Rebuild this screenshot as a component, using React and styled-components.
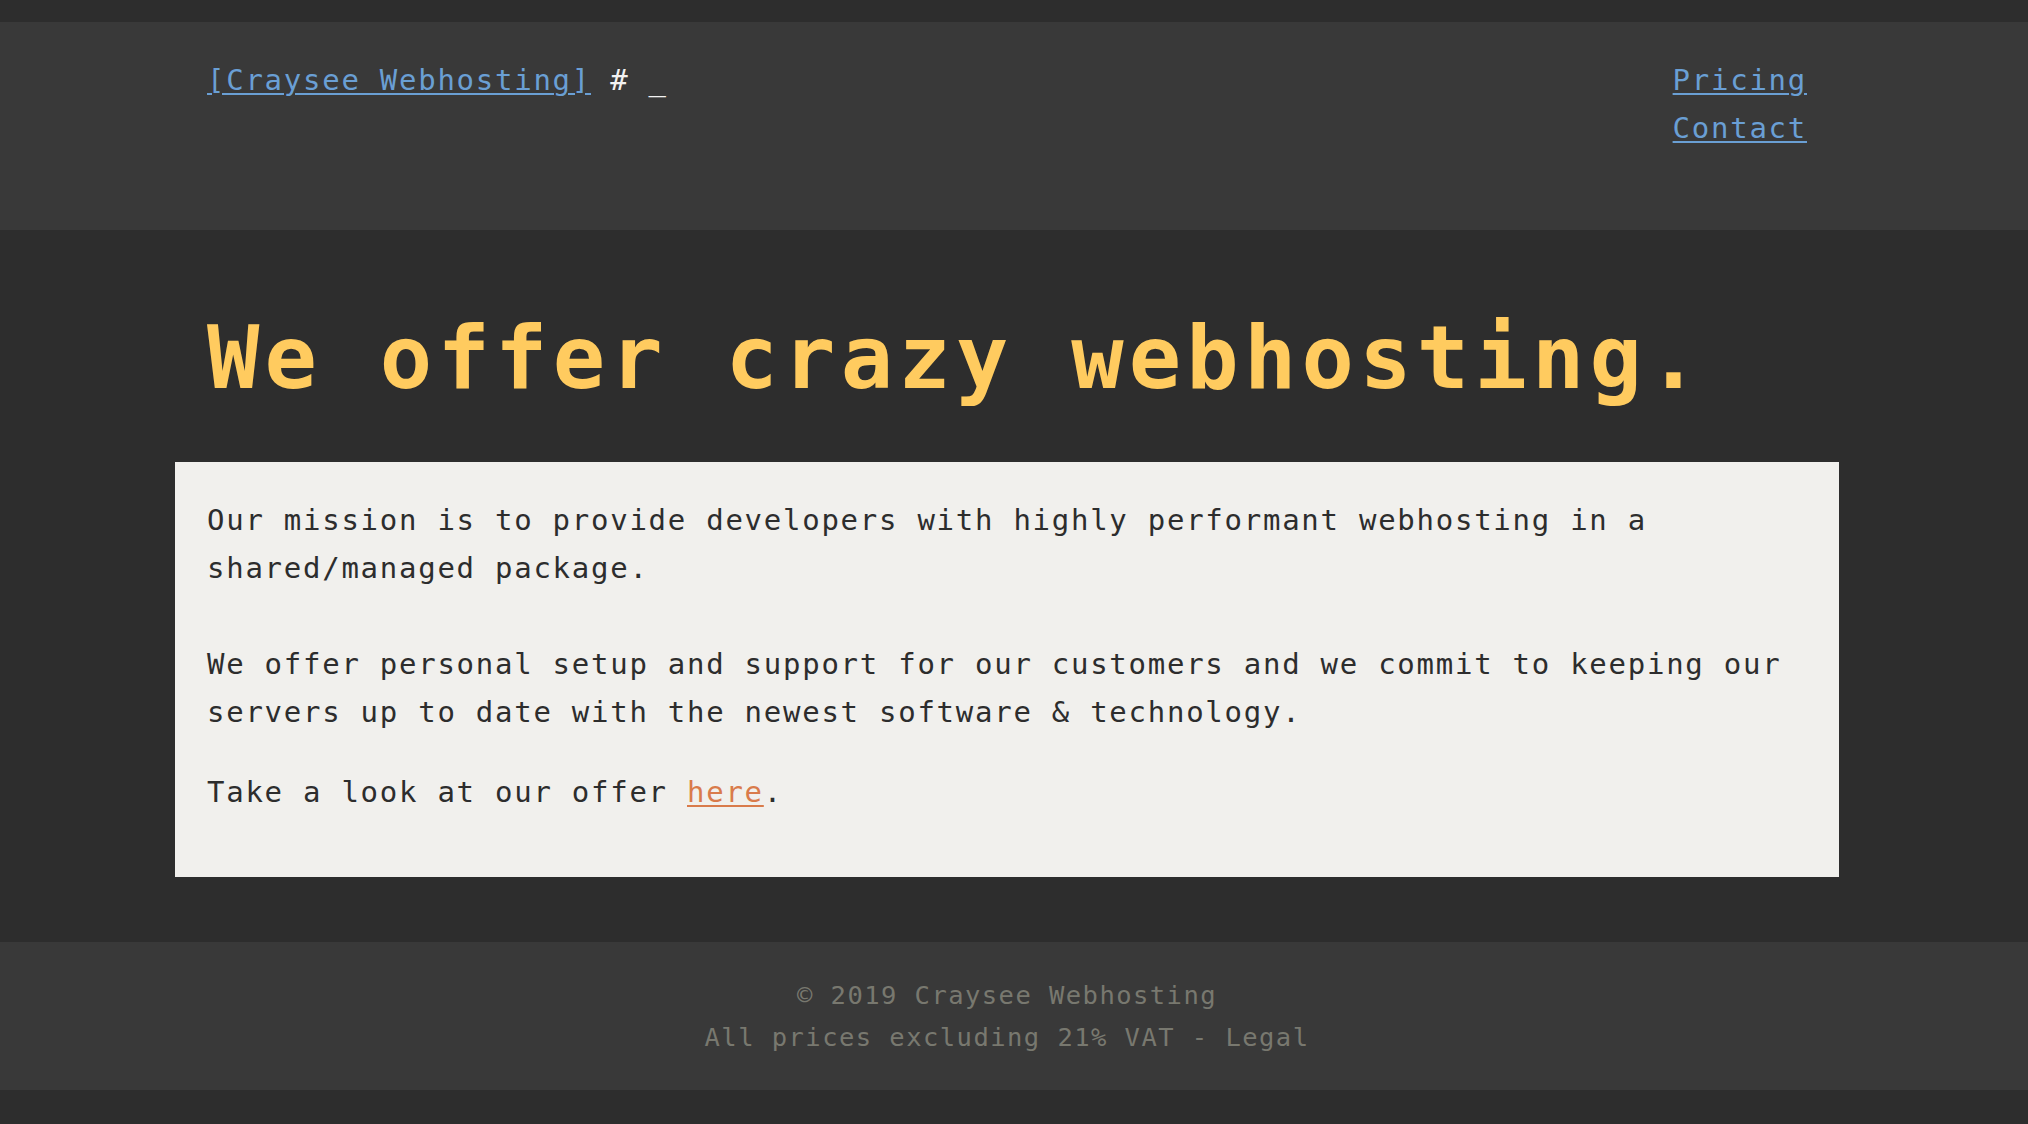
import React from "react";
import styled, { createGlobalStyle } from "styled-components";

const GlobalStyle = createGlobalStyle`
  html, body {
    margin: 0;
    padding: 0;
    background: #2d2d2d;
  }
  body {
    font-family: "DejaVu Sans Mono", "Liberation Mono", monospace;
    color: #2d2d2d;
  }
  * { box-sizing: border-box; }
`;

const Page = styled.div`
  padding-top: 22px;
  padding-bottom: 34px;
  background: #2d2d2d;
`;

const Band = styled.div`
  background: ${(p) => p.$bg};
  padding: ${(p) => p.$pad};
  padding-right: 14px;
`;

const Container = styled.div`
  max-width: 1664px;
  margin: 0 auto;
  padding: 0 ${(p) => (p.$inset ? "32px" : "0")};
`;

const HeaderRow = styled.div`
  display: flex;
  justify-content: space-between;
  align-items: flex-start;
  font-size: 29px;
  line-height: 48px;
  letter-spacing: 1.74px;
`;

const Brand = styled.div`
  color: #f2f2f2;
  white-space: pre;
`;

const Link = styled.a`
  color: ${(p) => p.$color || "#6a9fd4"};
  text-decoration: underline;
  text-decoration-thickness: 2px;
  text-underline-offset: 3px;
  cursor: pointer;
`;

const Nav = styled.nav`
  display: flex;
  flex-direction: column;
  align-items: flex-start;
`;

const Title = styled.h1`
  margin: 0 0 52px;
  padding: 0 32px;
  font-family: "DejaVu Sans Mono", monospace;
  font-weight: 700;
  font-size: 87px;
  line-height: 104px;
  letter-spacing: 5.23px;
  color: #ffcb5f;
`;

const Card = styled.section`
  background: #f1f0ed;
  padding: 34px 32px 61px;
  font-size: 29px;
  line-height: 48px;
  letter-spacing: 1.74px;
  color: #2d2d2d;
`;

const Para = styled.p`
  margin: 0 0 ${(p) => p.$after || 0}px;
`;

const FooterText = styled.div`
  text-align: center;
  font-size: 25.5px;
  line-height: 42px;
  letter-spacing: 1.45px;
  color: #78786f;
`;

export default function App() {
  return (
    <>
      <GlobalStyle />
      <Page>
        <Band $bg="#393939" $pad="34px 0 78px">
          <Container $inset>
            <HeaderRow>
              <Brand>
                <Link>[Craysee Webhosting]</Link>
                {" # _"}
              </Brand>
              <Nav>
                <Link>Pricing</Link>
                <Link>Contact</Link>
              </Nav>
            </HeaderRow>
          </Container>
        </Band>
        <Band $bg="#2d2d2d" $pad="76px 0 65px">
          <Container>
            <Title>We offer crazy webhosting.</Title>
            <Card>
              <Para $after={48}>
                Our mission is to provide developers with highly performant
                webhosting in a shared/managed package.
              </Para>
              <Para $after={32}>
                We offer personal setup and support for our customers and we
                commit to keeping our servers up to date with the newest
                software &amp; technology.
              </Para>
              <Para>
                Take a look at our offer <Link $color="#d97b4b">here</Link>.
              </Para>
            </Card>
          </Container>
        </Band>
        <Band $bg="#393939" $pad="32px 0 32px">
          <Container>
            <FooterText>
              <div>© 2019 Craysee Webhosting</div>
              <div>All prices excluding 21% VAT - Legal</div>
            </FooterText>
          </Container>
        </Band>
      </Page>
    </>
  );
}
